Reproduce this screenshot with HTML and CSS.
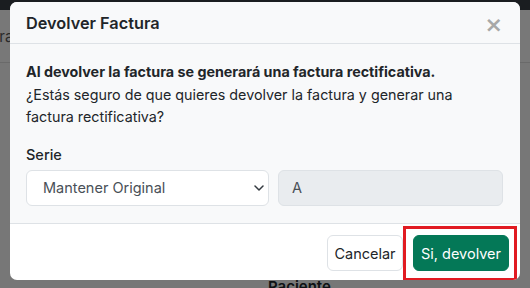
FILE: index.html
```html
<!DOCTYPE html>
<html lang="es">
<head>
    <meta charset="UTF-8">
    <meta name="viewport" content="width=device-width, initial-scale=1.0">
    <title>Devolver Factura</title>
    <link rel="stylesheet" href="styles.css">
</head>
<body>

<div class="page">
    <div class="navbar"></div>
    <div class="toolbar"><span class="toolbar-text">Filtrar</span></div>
    <div class="content">
        <span class="col-title">Paciente</span>
    </div>
</div>

<div class="backdrop"></div>

<div class="modal">
    <div class="modal-header">
        <h5 class="modal-title">Devolver Factura</h5>
        <button type="button" class="btn-close" aria-label="Cerrar">&times;</button>
    </div>
    <div class="modal-body">
        <p class="aviso">
            <strong>Al devolver la factura se generará una factura rectificativa.</strong><br>
            ¿Estás seguro de que quieres devolver la factura y generar una factura rectificativa?
        </p>
        <label class="form-label" for="serie">Serie</label>
        <div class="serie-row">
            <div class="select-wrap">
                <select id="serie" class="form-select">
                    <option>Mantener Original</option>
                </select>
                <svg class="chevron" width="10" height="6" viewBox="0 0 10 6"><path d="M1 1l4 4 4-4" fill="none" stroke="#343a40" stroke-width="1.5" stroke-linecap="round" stroke-linejoin="round"/></svg>
            </div>
            <input type="text" class="form-control" value="A" disabled>
        </div>
    </div>
    <div class="modal-footer">
        <button type="button" class="btn btn-light">Cancelar</button>
        <div class="highlight">
            <button type="button" class="btn btn-success">Si, devolver</button>
        </div>
    </div>
</div>

</body>
</html>
```

FILE: styles.css
```css
body {
    font-family: 'Inter', 'Noto Sans', sans-serif;
    margin: 0;
    width: 530px;
    height: 288px;
    overflow: hidden;
    background-color: #ffffff;
    color: #212529;
}

.page {
    height: 288px;
}

.navbar {
    height: 10px;
    background-color: #343a40;
}

.toolbar {
    height: 52px;
    background-color: #f1f1f1;
    border-bottom: 1px solid #d4d4d4;
    display: flex;
    align-items: center;
}

.toolbar-text {
    font-size: 15px;
    color: #555;
    margin-left: -22px;
}

.content {
    height: 225px;
    background-color: #eeeeee;
    display: flex;
    align-items: flex-end;
    padding-left: 268px;
}

.col-title {
    font-size: 15px;
    font-weight: 600;
    line-height: 14px;
    margin-bottom: -6px;
}

.backdrop {
    position: fixed;
    inset: 0;
    background-color: rgba(0, 0, 0, 0.5);
}

.modal {
    position: absolute;
    left: 10px;
    top: 2px;
    width: 510px;
    height: 278px;
    background-color: #fff;
    border-radius: 7px;
    overflow: hidden;
    display: flex;
    flex-direction: column;
}

.modal-header {
    flex-shrink: 0;
    height: 41px;
    background-color: #f8f9fa;
    border-bottom: 1px solid #dee2e6;
    display: flex;
    align-items: center;
    justify-content: space-between;
    padding: 0 16px;
}

.modal-title {
    margin: 0;
    font-size: 16.3px;
    font-weight: 600;
}

.btn-close {
    border: none;
    background: none;
    font-family: 'DejaVu Sans', sans-serif;
    font-size: 22px;
    font-weight: bold;
    color: #a8a8a8;
    padding: 0;
    margin-right: 1px;
    margin-top: 4px;
    cursor: pointer;
}

.modal-body {
    flex-shrink: 0;
    height: 179px;
    background-color: #f8f9fa;
    border-bottom: 1px solid #dee2e6;
    padding: 0 16px;
}

.aviso {
    margin: 17px 0 17px;
    font-size: 14.3px;
    line-height: 22.5px;
}

.form-label {
    display: block;
    font-size: 14.5px;
    font-weight: 500;
    margin-bottom: 7px;
}

.serie-row {
    display: flex;
    gap: 9px;
}

.select-wrap {
    position: relative;
    width: 243px;
}

.form-select {
    appearance: none;
    width: 100%;
    height: 36px;
    border: 1px solid #dee2e6;
    border-radius: 6px;
    background-color: #fff;
    font-family: inherit;
    font-size: 14.5px;
    color: #495057;
    padding: 0 16px;
}

.chevron {
    position: absolute;
    right: 5px;
    top: 15px;
}

.form-control {
    width: 225px;
    height: 36px;
    box-sizing: border-box;
    border: 1px solid #dee2e6;
    border-radius: 6px;
    background-color: #e9ecef;
    font-family: inherit;
    font-size: 14.5px;
    color: #495057;
    padding: 0 13px;
}

.modal-footer {
    flex: 1;
    display: flex;
    justify-content: flex-end;
    align-items: flex-start;
    padding: 2px 3px 0 0;
}

.btn {
    height: 36px;
    border-radius: 6px;
    font-family: inherit;
    font-size: 14.5px;
    padding: 0;
    white-space: nowrap;
    cursor: pointer;
}

.btn-light {
    width: 76px;
    margin-top: 9px;
    background-color: #fff;
    border: 1px solid #dee2e6;
    color: #212529;
}

.highlight {
    border: 3px solid #e11b22;
    padding: 6px 5px 7px 7px;
}

.btn-success {
    width: 96px;
    background-color: #047857;
    border: 1px solid #047857;
    color: #fff;
}
```
